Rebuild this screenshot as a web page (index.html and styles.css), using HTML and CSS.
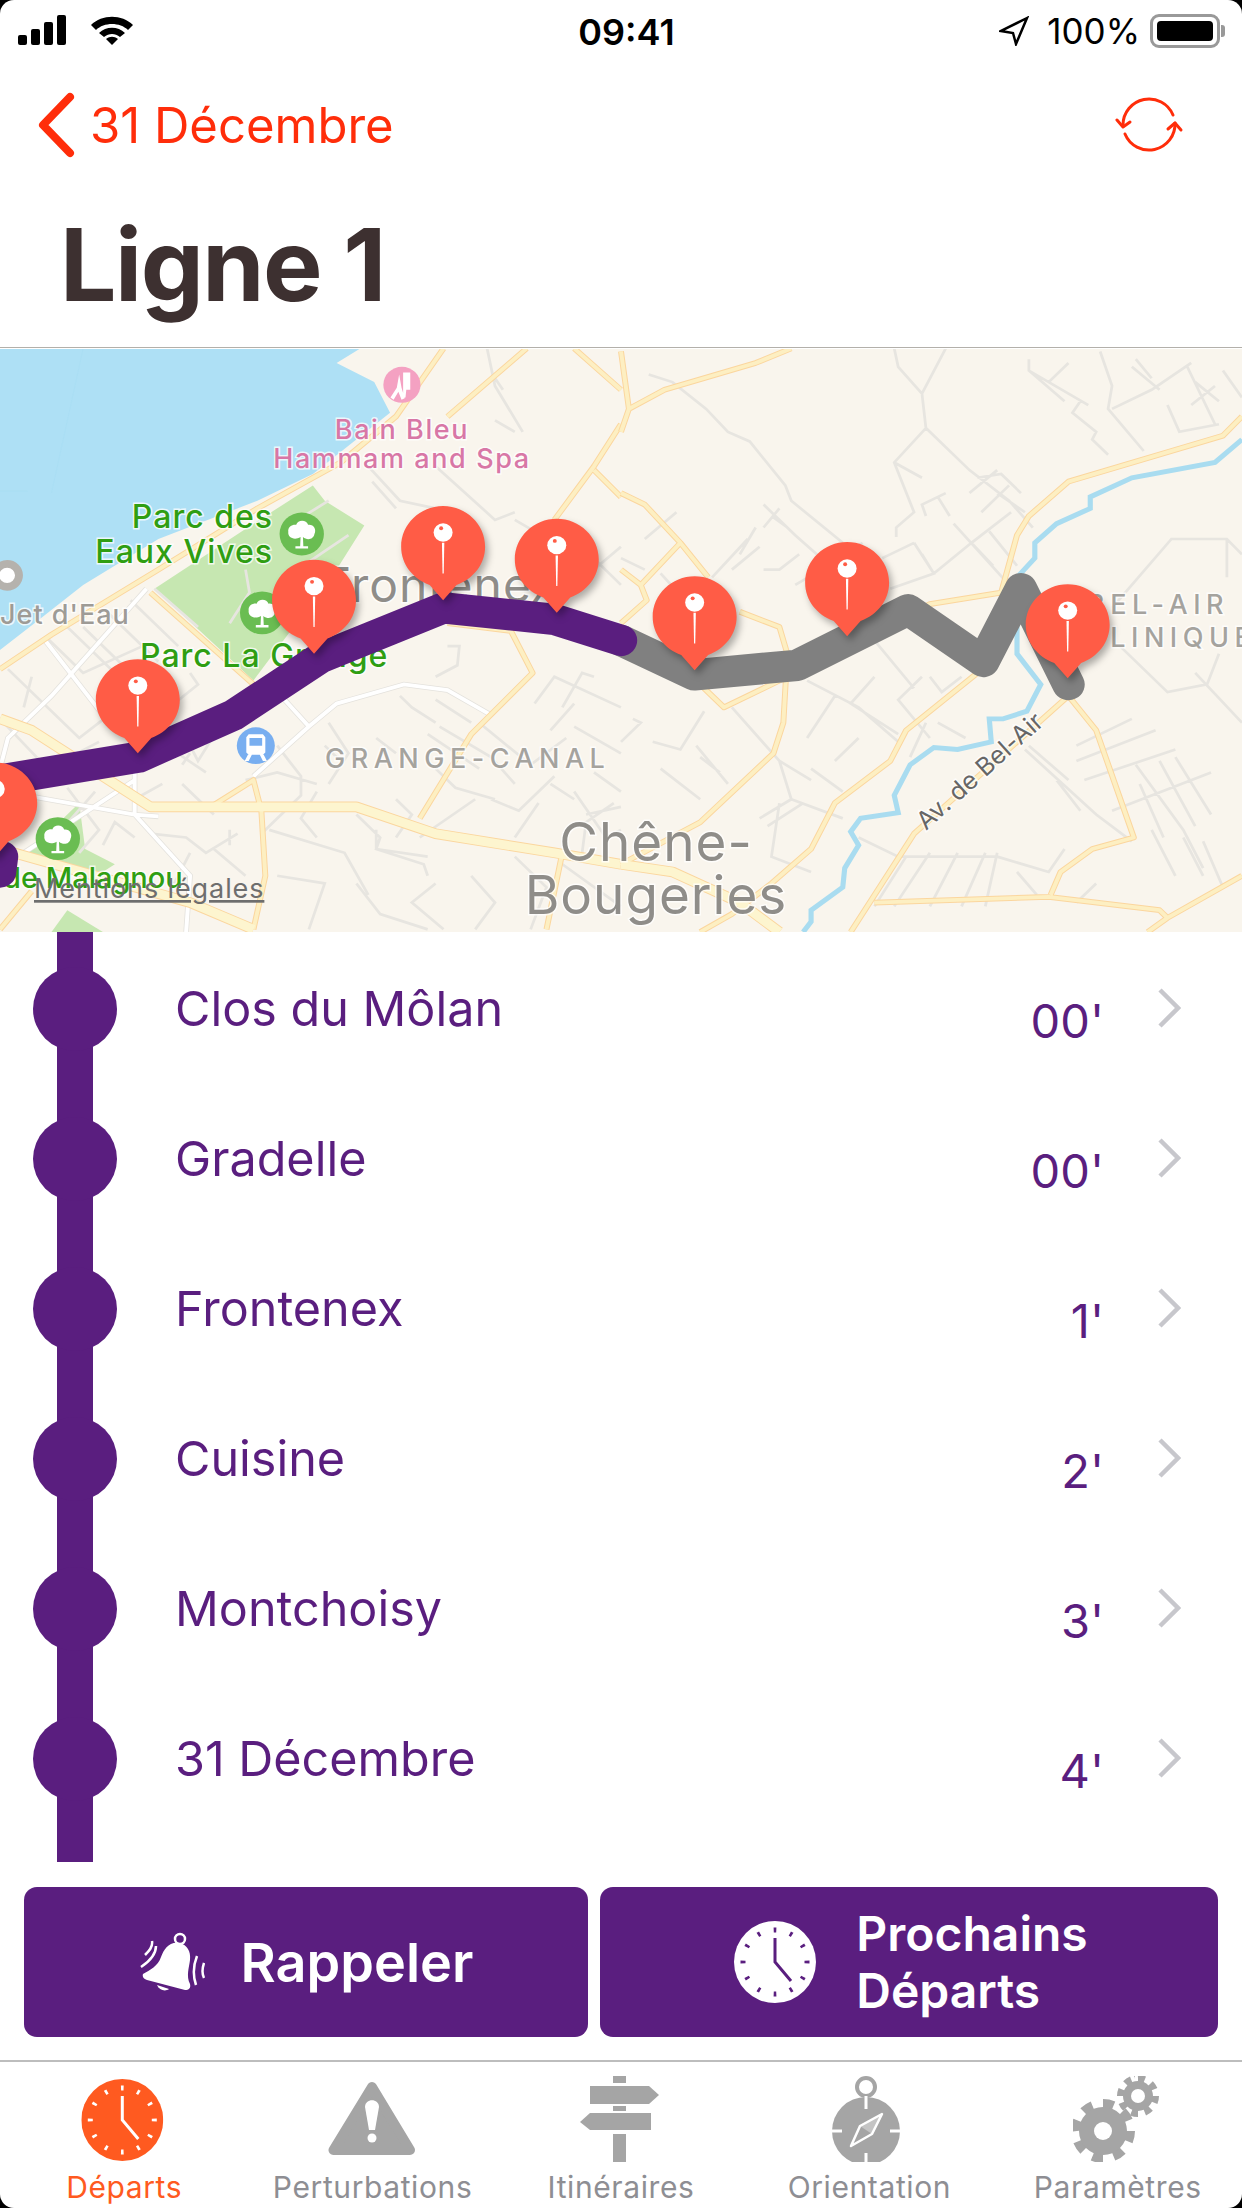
FILE: index.html

```html
<!DOCTYPE html>
<html lang="fr">
<head>
  <meta charset="UTF-8" />
  <meta name="viewport" content="width=device-width, initial-scale=1.0" />
  <title>Ligne 1</title>
  <link rel="stylesheet" href="styles.css">
</head>
<body>
  <svg class="defs" width="0" height="0">
    <symbol id="pin" viewBox="-110 -110 220 260" overflow="visible">
      <path class="pin-body" d="M0 -106C58 -106 106 -58 106 0C106 46 76 84 34 100L0 140L-34 100C-76 84 -106 46 -106 0C-106 -58 -58 -106 0 -106Z"/>
      <circle class="pin-head" cx="0" cy="-37" r="24"/>
      <circle class="pin-dot" cx="-5" cy="-48" r="5"/>
      <path class="pin-stem" d="M-3 -10H3L1.5 70H-1.5Z"/>
    </symbol>
    <symbol id="tree" viewBox="-60 -60 120 120" overflow="visible">
      <circle class="poi-park" r="56"/>
      <path class="poi-white" d="M-3 8C-20 18 -36 8 -34 -6C-36 -20 -22 -26 -14 -24C-10 -38 12 -38 16 -24C30 -26 38 -12 32 0C30 14 14 18 3 8L4 32H16V38H-16V32H-4Z"/>
    </symbol>
    <symbol id="clock" viewBox="0 0 82 82">
      <circle class="clock-face" cx="41" cy="41" r="41"/>
      <circle class="clock-ticks" cx="41" cy="41" r="32" pathLength="120" stroke-dasharray="1.6 8.4" stroke-dashoffset="0.8"/>
      <path class="clock-hands" d="M41 17V41L57 60"/>
    </symbol>
  </svg>

  <div class="screen">
    <header class="status-bar">
      <div class="status-left">
        <svg width="48" height="30" viewBox="0 0 48 30"><rect x="0" y="20" width="9" height="10" rx="2"/><rect x="13" y="14" width="9" height="16" rx="2"/><rect x="26" y="7" width="9" height="23" rx="2"/><rect x="39" y="0" width="9" height="30" rx="2"/></svg>
        <svg width="44" height="30" viewBox="0 0 44 30"><path d="M1 10C12 -1 32 -1 43 10L38 15C30 7 14 7 6 15Z"/><path d="M9 18C16 11 28 11 35 18L30 22C25 18 19 18 14 22Z"/><path d="M16 24C20 21 24 21 28 24L22 30Z"/></svg>
      </div>
      <div class="status-time">09:41</div>
      <div class="status-right">
        <svg class="status-loc" width="30" height="30" viewBox="0 0 30 30"><path d="M28 2L2 15L14 17L17 28Z"/></svg>
        <span class="status-pct">100%</span>
        <div class="battery"><div class="battery-level"></div></div>
        <div class="battery-nub"></div>
      </div>
    </header>

    <nav class="nav-bar">
      <a class="back-link">
        <svg width="38" height="66" viewBox="0 0 38 66"><path d="M33 5L6 33L33 61"/></svg>
        <span>31 Décembre</span>
      </a>
      <svg class="refresh" width="70" height="60" viewBox="0 0 70 60">
        <path d="M8 30A26 26 0 0 1 58 20"/>
        <path d="M60 28A26 26 0 0 1 10 39"/>
        <path d="M2 25L8 32L15 27"/>
        <path d="M53 34L60 28L66 35"/>
      </svg>
    </nav>

    <h1 class="page-title">Ligne 1</h1>

    <div class="map">
      <svg width="1242" height="583" viewBox="0 0 1242 583">
        <defs>
          <path id="streets-l" d="M1230 22L1250 120L1320 240M1250 210L1300 240M1250 100L1270 130M930 330L1010 420L1100 440M940 370L1000 440M1100 330L1250 470L1300 450M1300 470L1350 500M620 600L630 660L580 740M830 420L720 490M880 510L780 580M1430 500L1568 640M1500 600L1568 540M1130 800L1160 800L1155 850L1100 880M0 990L120 1120L250 1050M120 780L210 870L360 800M20 860L200 1040L300 960M150 730L300 880M210 750L340 880M270 710L400 840M330 680L450 800M390 650L500 750M80 880L60 960M480 870L500 900L440 950M560 1000L500 1100L480 1060M420 1060L520 1130M1010 930L1040 960L1100 1000M1100 940L1190 1000M1110 1010L1240 1090L1300 1160M1080 1030L1210 1120M1210 1000L1340 1110L1430 1040M1350 950L1400 880L1568 960M1420 960L1470 870L1500 880M1390 1020L1450 950M1450 1010L1568 1080M950 1040L1000 1080M830 1000L880 1080L830 1160M700 1060L760 1140L760 1190L660 1290M620 1150L700 1130L800 1160M800 1180L760 1250L800 1300M900 1240L960 1300L950 1330L1080 1350M1000 1300L1040 1240L1000 1200M1060 1300L1200 1200M1240 1200L1310 1230L1400 1140M1300 1300L1360 1210M1100 1120L1150 1170L1250 1200M1450 1180L1530 1300L1568 1280M1500 1130L1568 1180M1480 1240L1568 1220M1390 1160L1450 1200M950 1280V1330L1070 1370L1080 1400M680 1280L870 1340L930 1450M700 1400L820 1420L780 1540M900 1420L960 1500L1080 1540M1100 1420L1040 1470L1120 1540M1190 1400L1250 1470L1200 1540M1300 1350L1380 1430L1340 1540M1420 1370L1568 1480M170 1170L250 1280L200 1340M260 1320L290 1260L340 1300M340 1200L410 1160M240 1180L130 1310M380 1290L470 1300L520 1340L600 1290M580 1280V1320M480 1340L440 1420M540 1330L620 1400M460 1160L540 1240M480 1080L460 1110M820 1060L850 1090M1550 1210L1480 1260L1470 1340"/>
          <path id="streets-r" d="M690 22L700 70L760 140L820 22M760 140L770 230L690 320L740 450L695 490V515M770 230L880 340L980 420L1040 490M70 90L130 110L215 180L270 240L325 265L415 380L430 420L560 530M690 320L760 360M1030 50L1030 80L1180 170M1030 80L1120 160M1210 30L1240 120L1230 180L1320 290M1240 180L1340 130L1440 60M1300 50L1340 100M1430 70L1500 220M1380 170L1410 240L1510 220M1450 110L1510 160M1440 170L1500 120M1360 130L1290 70M1160 160L1140 190L1200 240L1190 260L1230 300M1080 110L1130 60M1520 80L1568 150M900 360L960 350L1010 400M820 400L760 430L770 460M880 400L950 340M950 400L1020 450M910 450L980 380M800 410L830 460M760 560L790 610L680 650M740 530L660 570M740 530L790 610M790 610L885 530L985 450M885 530L940 590M840 480L980 640M930 500L1000 590M360 430L440 510L560 620M380 460L420 490M400 440L360 490M230 620L320 520M280 600L350 540M300 560L340 490M360 600L400 600L450 560M440 640L540 580L610 530M600 660L520 590M60 520L140 450M0 570L60 600M100 610L250 780M620 760L740 910M760 880L700 940L780 1040M640 880L580 950L700 1030M470 890L600 960L700 1050M540 930L470 1040M600 1040L540 1100M480 1120L560 1180M400 1100L480 1150M730 1090L770 1000M780 880L810 920L860 880M800 1000L870 1040M1020 1070L1200 1240L1290 1310M1100 1150L1160 1230M1030 1060L1130 1150M1150 1060L1290 990M1150 1100L1350 1020M1170 1150L1400 1070M1240 1230L1490 1130M1300 1110L1420 1280L1470 1380M1360 1100L1450 1270M1400 1090L1490 1240M1310 1160L1370 1300M1260 800L1380 920L1480 900L1510 820M1240 700L1390 520L1530 520L1568 560M1530 520V620M1450 870L1568 1000M80 1050L150 1070L210 970M190 1060L270 1160M280 960L400 1100L430 1200L560 1250M100 1120L200 1200M200 1090L250 1130M30 990L50 1000L0 1050M350 1250L430 1200M370 1270L460 1210M400 1210L380 1350L480 1390M600 1300L700 1350L950 1350M720 1350L640 1480M780 1340L690 1480M850 1340L780 1480M920 1340L860 1480M950 1340L920 1480M950 1350L1080 1390L1120 1330M1000 1390L1050 1450M1470 1310L1520 1430M1340 1280L1400 1400M1420 1300L1470 1400M1200 1420L1150 1470"/>
          <path id="lanes-l" d="M0 1120L20 1040L130 930L370 650M110 780L260 980M10 1180L340 1240L400 1245M60 1340L340 1150M640 1140L780 1010L850 950L1020 900L1130 915L1240 980M710 930L780 1010M340 1090V1240M340 1240L480 1400L470 1547"/>
          <path id="roads-l" d="M0 860L130 770L400 600L650 440L860 320L1000 200L1120 22M1130 200L1330 22M1400 470L1500 330L1568 220M1500 340L1568 410M1450 22L1568 130M380 660L640 900M1130 740L1290 760L1345 870L1190 1030L1060 1250M540 1215L640 1150L660 1230L670 1400L640 1540M1420 1340L1380 1540M0 1540L80 1440"/>
          <path id="major-l" d="M0 990L80 1020L200 1100L380 1220H900L1100 1290L1400 1340L1568 1370M0 1330L480 1470L640 1540"/>
          <path id="roads-r" d="M0 30L20 180L0 240M20 180L110 130L340 60L430 22M0 400L60 430L150 530L220 620M150 530L50 640L0 600M50 640L65 680L0 740M300 710L400 750L420 820L410 1000L385 1080L200 1260L0 1370M190 890L260 960L420 880L780 690L960 660L1000 510L1030 460L1130 370L1520 250L1568 200M900 870L720 1020L680 1100L540 1210L480 1330L380 1420L280 1500L200 1547M1130 930L740 1290L580 1547M1130 930L1200 1020L1295 1300L1190 1330L1110 1390L1085 1450M640 1470L1080 1455L1360 1490L1380 1510L1568 1400M1380 1510L1330 1547"/>
          <path id="major-r" d="M0 1370L130 1390L300 1470L400 1547"/>
        </defs>

        <rect class="land" width="1242" height="583"/>

        <g transform="translate(0 -9) scale(.396 .3827)">
          <path class="water" d="M0 22H910L850 60L945 110L985 190L790 350L650 420L400 520L210 640L100 730L0 810Z"/>
          <path class="water-line" d="M210 22L130 400M0 395H70"/>
          <path class="park" d="M390 650L640 480L790 380L820 420L920 485L850 600L640 890Z"/>
          <path class="park" d="M70 1340L200 1210L215 1330L290 1370L230 1410L70 1360Z"/>
          <path class="park" d="M130 1547L170 1490L260 1547Z"/>
          <use href="#streets-l" class="street"/>
          <use href="#lanes-l" class="lane-edge"/>
          <use href="#lanes-l" class="lane-fill"/>
          <use href="#roads-l" class="road-edge"/>
          <use href="#major-l" class="major-edge"/>
          <use href="#roads-l" class="road-fill"/>
          <use href="#major-l" class="major-fill"/>
        </g>
        <g transform="translate(621 -9) scale(.396 .3827)">
          <use href="#streets-r" class="street"/>
          <use href="#roads-r" class="road-edge"/>
          <use href="#major-r" class="major-edge"/>
          <use href="#roads-r" class="road-fill"/>
          <use href="#major-r" class="major-fill"/>
          <path class="river" d="M1568 260L1500 320L1290 360L1185 410V440L1100 480L1045 530V570L1000 620V820L1060 900L1025 970L965 990H930L935 1050L850 1070L790 1065L730 1110L690 1190L700 1235L605 1250L580 1285L600 1320L565 1380L560 1430L480 1490V1520L460 1547"/>
        </g>

        <text class="lbl lbl-poi" x="402" y="90" text-anchor="middle">Bain Bleu</text>
        <text class="lbl lbl-poi" x="402" y="119" text-anchor="middle">Hammam and Spa</text>
        <text class="lbl lbl-park" x="273" y="179" text-anchor="end">Parc des</text>
        <text class="lbl lbl-park" x="273" y="214" text-anchor="end">Eaux Vives</text>
        <text class="lbl lbl-park" x="140" y="318">Parc La Grange</text>
        <text class="lbl lbl-malagnou" x="3" y="539">de Malagnou</text>
        <text class="lbl lbl-small" x="0" y="275">Jet d'Eau</text>
        <text class="lbl lbl-area" x="325" y="419">GRANGE-CANAL</text>
        <text class="lbl lbl-area" x="1229" y="265" text-anchor="end">BEL-AIR</text>
        <text class="lbl lbl-area" x="1085" y="298">CLINIQUE</text>
        <text class="lbl lbl-district" x="323" y="253">Frontenex</text>
        <text class="lbl lbl-town" x="656" y="512" text-anchor="middle">Chêne-</text>
        <text class="lbl lbl-town" x="656" y="565" text-anchor="middle">Bougeries</text>
        <text class="lbl lbl-street" x="926" y="482" transform="rotate(-42 926 482)">Av. de Bel-Air</text>

        <g transform="translate(621 -9) scale(.396 .3827)">
          <path class="route route-grey" d="M0 785L185 875L445 850L725 705L915 840L1010 650L1130 900"/>
        </g>
        <g transform="translate(0 -9) scale(.396 .3827)">
          <circle class="poi-pink" cx="1015" cy="117" r="47"/>
          <path class="poi-white" d="M1018 85H1036V130H1026L1024 150H1018ZM1008 90L1014 125L1022 152L1014 156L1006 135L994 156L986 150L1002 125Z"/>
          <use href="#tree" x="702" y="447" width="120" height="120"/>
          <use href="#tree" x="602" y="653" width="120" height="120"/>
          <use href="#tree" x="86" y="1243" width="120" height="120"/>
          <circle class="poi-train" cx="646" cy="1060" r="48"/>
          <path class="poi-white" d="M628 1030H664L670 1038V1078L664 1084H628L622 1078V1038ZM630 1040V1060H662V1040ZM626 1084H636L628 1100H618ZM656 1084H666L674 1100H664Z"/>
          <circle class="poi-jet" cx="18" cy="615" r="30"/>
          <circle class="poi-white" cx="18" cy="615" r="17"/>
          <path class="route route-purple" d="M0 1390L5 1350M0 1150L350 1090L590 980L810 830L1120 700L1400 730L1568 785"/>
        </g>
        <g transform="translate(0 -9) scale(.396 .3827)">
          <use href="#pin" x="-122" y="1100" width="220" height="260"/>
          <use href="#pin" x="238" y="830" width="220" height="260"/>
          <use href="#pin" x="683" y="570" width="220" height="260"/>
          <use href="#pin" x="1009" y="430" width="220" height="260"/>
          <use href="#pin" x="1296" y="463" width="220" height="260"/>
        </g>
        <g transform="translate(621 -9) scale(.396 .3827)">
          <use href="#pin" x="76" y="613" width="220" height="260"/>
          <use href="#pin" x="461" y="524" width="220" height="260"/>
          <use href="#pin" x="1018" y="634" width="220" height="260"/>
        </g>

        <text class="lbl-legal" x="34" y="549">Mentions légales</text>
      </svg>
    </div>

    <section class="stops">
      <div class="stops-line"></div>
      <div class="stop"><span class="stop-dot"></span><span class="stop-name">Clos du Môlan</span><span class="stop-time">00'</span><svg class="chevron" width="24" height="40" viewBox="0 0 24 40"><path d="M3 2L21 20L3 38"/></svg></div>
      <div class="stop"><span class="stop-dot"></span><span class="stop-name">Gradelle</span><span class="stop-time">00'</span><svg class="chevron" width="24" height="40" viewBox="0 0 24 40"><path d="M3 2L21 20L3 38"/></svg></div>
      <div class="stop"><span class="stop-dot"></span><span class="stop-name">Frontenex</span><span class="stop-time">1'</span><svg class="chevron" width="24" height="40" viewBox="0 0 24 40"><path d="M3 2L21 20L3 38"/></svg></div>
      <div class="stop"><span class="stop-dot"></span><span class="stop-name">Cuisine</span><span class="stop-time">2'</span><svg class="chevron" width="24" height="40" viewBox="0 0 24 40"><path d="M3 2L21 20L3 38"/></svg></div>
      <div class="stop"><span class="stop-dot"></span><span class="stop-name">Montchoisy</span><span class="stop-time">3'</span><svg class="chevron" width="24" height="40" viewBox="0 0 24 40"><path d="M3 2L21 20L3 38"/></svg></div>
      <div class="stop"><span class="stop-dot"></span><span class="stop-name">31 Décembre</span><span class="stop-time">4'</span><svg class="chevron" width="24" height="40" viewBox="0 0 24 40"><path d="M3 2L21 20L3 38"/></svg></div>
    </section>

    <div class="actions">
      <button class="action action-remind">
        <svg class="bell" width="66" height="60" viewBox="0 0 66 60">
          <circle class="bell-ring" cx="41" cy="7" r="5"/>
          <path class="bell-body" d="M41 11C30 9 25 17 22 25C19 34 11 38 4 42C3 45 5 47 8 48L46 58C50 58 52 56 51 52C47 44 50 36 51 28C52 19 48 13 41 11Z"/>
          <path class="bell-body" d="M18 53L30 57C26 60 20 58 18 53Z"/>
          <path class="bell-ring" d="M13 9C14 15 10 19 6 23M17 14C17 22 11 29 2 35M58 24C54 34 54 44 57 53M65 31C63 37 63 42 65 46"/>
        </svg>
        <span>Rappeler</span>
      </button>
      <button class="action action-next">
        <svg class="clock-white" width="82" height="82"><use href="#clock"/></svg>
        <span>Prochains<br>Départs</span>
      </button>
    </div>

    <footer class="tab-bar">
      <div class="tab tab-active">
        <svg class="tab-icon clock-orange" width="90" height="86" viewBox="0 0 90 86"><use href="#clock" x="2.3" y="3" width="82" height="82"/></svg>
        <span>Départs</span>
      </div>
      <div class="tab">
        <svg class="tab-icon" width="90" height="86" viewBox="0 0 90 86">
          <path class="tri" d="M44 11L5.5 74H82Z"/>
          <path class="cut" d="M37 31C37 22 51 22 51 31L47 54H41Z"/>
          <circle class="cut" cx="44" cy="62" r="4.5"/>
        </svg>
        <span>Perturbations</span>
      </div>
      <div class="tab">
        <svg class="tab-icon" width="90" height="86" viewBox="0 0 90 86">
          <path d="M37 0H50V7H37ZM37 30H50V35H37ZM37 58H50V86H37Z"/>
          <path d="M14 10H73L83 19L73 28H14Z"/>
          <path d="M4 46L14 37H75V54H14Z"/>
        </svg>
        <span>Itinéraires</span>
      </div>
      <div class="tab">
        <svg class="tab-icon" width="90" height="86" viewBox="0 0 90 86">
          <circle class="compass-ring" cx="42" cy="11" r="9"/>
          <circle cx="42" cy="55" r="34"/>
          <path class="compass-cut" d="M42 20V33M8 55H18M66 55H76M42 77V89"/>
          <path class="compass-needle" d="M58 38L36 50L27 70L48 58Z"/>
          <path class="compass-fill" d="M58 38L36 50L48 58Z"/>
        </svg>
        <span>Orientation</span>
      </div>
      <div class="tab">
        <svg class="tab-icon" width="90" height="86" viewBox="0 0 90 86">
          <circle class="gear-teeth gear-big" cx="30" cy="55" r="27" pathLength="80" stroke-dasharray="5 5"/>
          <circle cx="30" cy="55" r="24"/>
          <circle class="cut" cx="30" cy="55" r="9"/>
          <circle class="gear-teeth gear-small" cx="65" cy="20" r="17" pathLength="80" stroke-dasharray="5 5"/>
          <circle cx="65" cy="20" r="15"/>
          <circle class="cut" cx="65" cy="20" r="7"/>
        </svg>
        <span>Paramètres</span>
      </div>
    </footer>
  </div>
</body>
</html>
```

FILE: styles.css

```css
* {
  box-sizing: border-box;
}
body {
  margin: 0;
  background-color: #000;
  font-family: Inter, "Noto Sans", sans-serif;
}
.defs {
  position: absolute;
}
.screen {
  width: 1242px;
  height: 2208px;
  background-color: #fff;
  border-radius: 14px;
  overflow: hidden;
}

/* status bar */
.status-bar {
  height: 60px;
  padding: 15px 17px 0 18px;
  display: grid;
  grid-template-columns: 1fr auto 1fr;
  align-items: start;
  color: #000;
}
.status-left {
  display: flex;
  gap: 24px;
}
.status-time {
  padding-left: 10px;
  font-size: 36px;
  font-weight: 600;
  line-height: 34px;
}
.status-right {
  display: flex;
  justify-content: flex-end;
  align-items: center;
  height: 32px;
}
.status-loc {
  fill: #fff;
  stroke: #000;
  stroke-width: 2.5;
  margin-right: 18px;
}
.status-pct {
  font-size: 35px;
  line-height: 32px;
  margin-right: 10px;
}
.battery {
  width: 70px;
  height: 34px;
  padding: 4px;
  border: 3px solid #999;
  border-radius: 9px;
}
.battery-level {
  height: 100%;
  background-color: #000;
  border-radius: 4px;
}
.battery-nub {
  width: 4px;
  height: 12px;
  margin-left: 1px;
  background-color: #999;
  border-radius: 0 3px 3px 0;
}

/* nav */
.nav-bar {
  height: 130px;
  padding: 0 57px 0 37px;
  display: flex;
  justify-content: space-between;
  align-items: center;
  color: #ff2d0a;
}
.back-link {
  display: flex;
  align-items: center;
  gap: 15px;
  font-size: 49px;
}
.back-link svg {
  fill: none;
  stroke: currentColor;
  stroke-width: 8;
  stroke-linecap: round;
  stroke-linejoin: round;
}
.refresh {
  fill: none;
  stroke: currentColor;
  stroke-width: 3;
  stroke-linecap: round;
  stroke-linejoin: round;
}
.page-title {
  height: 158px;
  margin: 0;
  padding: 0 0 0 60px;
  font-size: 100px;
  font-weight: 700;
  line-height: 150px;
  letter-spacing: -1.5px;
  color: #3d3030;
  border-bottom: 1px solid #b3b0aa;
}

/* map */
.map {
  height: 583px;
  margin-top: 1px;
  overflow: hidden;
}
.map svg {
  display: block;
}
.land {
  fill: #f9f5ed;
}
.water {
  fill: #aee0f5;
}
.water-line {
  fill: none;
  stroke: #a9ddf3;
  stroke-width: 2;
}
.park {
  fill: #c6e7b1;
}
.street {
  fill: none;
  stroke: #e7e5e0;
  stroke-width: 7;
}
.lane-edge {
  fill: none;
  stroke: #e4e2dd;
  stroke-width: 14;
}
.lane-fill {
  fill: none;
  stroke: #fff;
  stroke-width: 10;
}
.road-edge {
  fill: none;
  stroke: #fbd69e;
  stroke-width: 15;
  stroke-linejoin: round;
}
.road-fill {
  fill: none;
  stroke: #fdefc2;
  stroke-width: 10;
  stroke-linejoin: round;
}
.major-edge {
  fill: none;
  stroke: #fbd69e;
  stroke-width: 28;
  stroke-linejoin: round;
}
.major-fill {
  fill: none;
  stroke: #fdf5cf;
  stroke-width: 23;
  stroke-linejoin: round;
}
.river {
  fill: none;
  stroke: #a9dcf0;
  stroke-width: 13;
}
.lbl {
  paint-order: stroke;
  stroke: rgba(255, 255, 255, 0.75);
  stroke-width: 3px;
  font-family: Inter, "Noto Sans", sans-serif;
}
.lbl-poi {
  font-size: 27px;
  font-weight: 500;
  letter-spacing: 1.6px;
  fill: #d877a6;
}
.lbl-park {
  font-size: 32px;
  font-weight: 500;
  letter-spacing: 1px;
  fill: #2f9e12;
}
.lbl-malagnou {
  font-size: 29px;
  font-weight: 500;
  fill: #2f9e12;
}
.lbl-small {
  font-size: 27px;
  font-weight: 500;
  letter-spacing: 1px;
  fill: #9e9b96;
}
.lbl-area {
  font-size: 27px;
  font-weight: 500;
  letter-spacing: 5.5px;
  fill: #a5a39e;
}
.lbl-district {
  font-size: 48px;
  letter-spacing: 1px;
  fill: #8f8d89;
}
.lbl-town {
  font-size: 53px;
  letter-spacing: 1px;
  fill: #8f8d89;
}
.lbl-street {
  font-size: 25px;
  fill: #666;
}
.lbl-legal {
  font-family: Inter, "Noto Sans", sans-serif;
  font-size: 27px;
  letter-spacing: 0.9px;
  fill: #6e6e6e;
  text-decoration: underline;
}
.poi-white {
  fill: #fff;
}
.poi-park {
  fill: #6abd52;
}
.poi-pink {
  fill: #f4a1c2;
}
.poi-train {
  fill: #78aef0;
}
.poi-jet {
  fill: #fff;
  stroke: #b5b2ad;
  stroke-width: 20;
}
.route {
  fill: none;
  stroke-width: 82;
  stroke-linejoin: round;
  stroke-linecap: round;
}
.route-purple {
  stroke: #5a1e7f;
}
.route-grey {
  stroke: #808080;
}
.pin-body {
  fill: #ff5c46;
  filter: drop-shadow(8px 12px 10px rgba(0, 0, 0, 0.3));
}
.pin-head,
.pin-stem {
  fill: #fff;
}
.pin-dot {
  fill: #ff5c46;
}

/* stops */
.stops {
  position: relative;
  height: 930px;
  padding-top: 2px;
  color: #5a1e7f;
}
.stops-line {
  position: absolute;
  left: 57px;
  top: 0;
  bottom: 0;
  width: 36px;
  background-color: #5a1e7f;
}
.stop {
  position: relative;
  height: 150px;
  padding: 0 61px 0 33px;
  display: flex;
  align-items: center;
}
.stop-dot {
  width: 84px;
  height: 84px;
  margin-right: 58px;
  background-color: #5a1e7f;
  border-radius: 50%;
}
.stop-name {
  flex: 1;
  font-size: 48.5px;
  margin-top: -2px;
}
.stop-time {
  font-size: 47px;
  margin-top: 22px;
  margin-right: 53px;
}
.chevron {
  fill: none;
  stroke: #c7c7cc;
  stroke-width: 4.5;
  margin-top: -2px;
}

/* buttons */
.actions {
  height: 198px;
  padding: 25px 24px 0 24px;
  display: grid;
  grid-template-columns: 564px 618px;
  gap: 12px;
}
.action {
  height: 150px;
  padding: 0;
  display: flex;
  justify-content: center;
  align-items: center;
  border: none;
  border-radius: 13px;
  background-color: #5a1e7f;
  color: #fff;
  font-family: inherit;
  font-weight: 600;
  text-align: left;
}
.action-remind {
  gap: 36px;
  font-size: 54px;
}
.action-next {
  padding-left: 4px;
  gap: 40px;
  font-size: 48px;
  line-height: 57px;
}
.bell-body {
  fill: #fff;
}
.bell-ring {
  fill: none;
  stroke: #fff;
  stroke-width: 2.5;
}
.clock-face {
  fill: var(--face);
}
.clock-ticks {
  fill: none;
  stroke: var(--tick);
  stroke-width: 5;
}
.clock-hands {
  fill: none;
  stroke: var(--tick);
  stroke-width: 3;
}
.clock-white {
  --face: #fff;
  --tick: #5a1e7f;
}
.clock-orange {
  --face: #ff5a20;
  --tick: #fff;
}

/* tabs */
.tab-bar {
  height: 148px;
  padding-top: 14px;
  display: grid;
  grid-template-columns: repeat(5, 1fr);
  border-top: 2px solid #bdbdbd;
}
.tab {
  display: flex;
  flex-direction: column;
  align-items: center;
  font-size: 30px;
  letter-spacing: 0.6px;
  color: #8e8e93;
}
.tab span {
  margin-top: 7px;
}
.tab-active {
  color: #ff5a20;
}
.tab-icon {
  fill: #a5a5a5;
}
.tri {
  stroke: #a5a5a5;
  stroke-width: 10;
  stroke-linejoin: round;
}
.cut {
  fill: #fff;
}
.compass-ring {
  fill: none;
  stroke: #a5a5a5;
  stroke-width: 4;
}
.compass-cut {
  fill: none;
  stroke: #fff;
  stroke-width: 3;
}
.compass-needle {
  fill: none;
  stroke: #fff;
  stroke-width: 2.5;
  stroke-linejoin: round;
}
.compass-fill {
  fill: #fff;
  opacity: 0.35;
}
.gear-teeth {
  fill: none;
  stroke: #a5a5a5;
}
.gear-big {
  stroke-width: 10;
}
.gear-small {
  stroke-width: 8;
}
```
